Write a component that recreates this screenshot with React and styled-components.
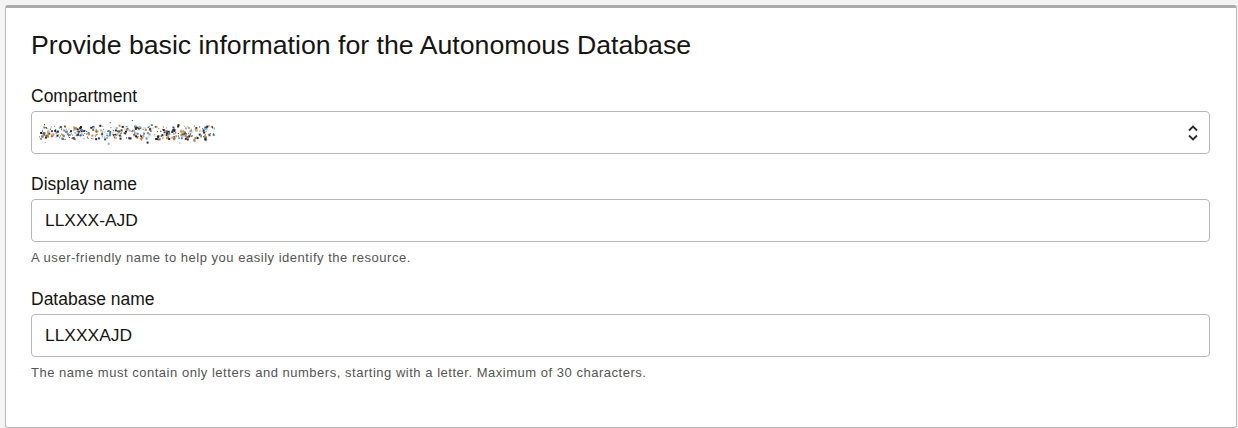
import React from "react";
import styled, { createGlobalStyle } from "styled-components";

const GlobalStyle = createGlobalStyle`
  body {
    margin: 0;
    background: #f4f4f4;
    font-family: "Liberation Sans", Arial, sans-serif;
  }
`;

const Page = styled.div`
  padding: 5px 1px 0 5px;
`;

const Card = styled.section`
  background: #fff;
  border: 1px solid #b9b9b9;
  border-top: 3px solid #ababab;
  border-radius: 3px;
  height: 423px;
  box-sizing: border-box;
  padding: 22px 26px 0 25px;
`;

const Title = styled.h2`
  margin: 0 0 26px;
  font-size: 26.7px;
  line-height: 30px;
  font-weight: 400;
  color: #161513;
`;

const Field = styled.div`
  display: flex;
  flex-direction: column;
  margin-bottom: ${(p) => (p.hasHelp ? "23px" : "20px")};
`;

const Label = styled.label`
  font-size: 17.5px;
  line-height: 20px;
  color: #161513;
  margin-bottom: 5px;
`;

const Box = styled.div`
  position: relative;
  display: flex;
  align-items: center;
  height: 43px;
  box-sizing: border-box;
  border: 1px solid #b5b7ba;
  border-radius: 4px;
  padding: 0 13px;
  font-size: 17.4px;
  color: #161513;
`;

const Help = styled.div`
  margin-top: 8px;
  font-size: 13px;
  letter-spacing: 0.52px;
  line-height: 16px;
  color: #555;
`;

const Arrows = styled.svg`
  position: absolute;
  right: 10px;
  top: 12px;
`;

// scribbled-out compartment name
const colors = ["#1f1f2e", "#c9772b", "#3d8ee0", "#8b5a2b", "#e8a14b", "#7fb7e8", "#4a4a4a", "#1d2f4f", "#c8ecf8", "#2a2a2a", "#d9822b"];
const dots = [];
let seed = 23;
const rnd = () => {
  seed = (seed * 9301 + 49297) % 233280;
  return seed / 233280;
};
// clusters of pixels, roughly one per glyph
for (let g = 0; g < 22; g++) {
  const cx = 4 + g * 7.8 + rnd() * 3;
  const count = 14 + Math.floor(rnd() * 18);
  for (let i = 0; i < count; i++) {
    const x = cx + (rnd() - 0.5) * 10;
    const spread = rnd() > 0.88 ? 24 : 13;
    const y = 13 + (rnd() - 0.5) * spread;
    dots.push({ x, y, c: colors[Math.floor(rnd() * colors.length)], s: rnd() > 0.55 ? 2 : 1 });
  }
}

const Scribble = () => (
  <svg width="176" height="28" viewBox="0 0 176 28" style={{ marginLeft: -6 }}>
    {dots.map((d, i) => (
      <rect key={i} x={d.x.toFixed(1)} y={d.y.toFixed(1)} width={d.s} height={d.s} fill={d.c} />
    ))}
  </svg>
);

export default function App() {
  return (
    <Page>
      <GlobalStyle />
      <Card>
        <Title>Provide basic information for the Autonomous Database</Title>
        <Field>
          <Label>Compartment</Label>
          <Box>
            <Scribble />
            <Arrows width="12" height="18" viewBox="0 0 12 18">
              <path d="M2 6.5 L6 2.5 L10 6.5" fill="none" stroke="#2b2b2b" strokeWidth="1.8" />
              <path d="M2 11.5 L6 15.5 L10 11.5" fill="none" stroke="#2b2b2b" strokeWidth="1.8" />
            </Arrows>
          </Box>
        </Field>
        <Field hasHelp>
          <Label>Display name</Label>
          <Box>LLXXX-AJD</Box>
          <Help>A user-friendly name to help you easily identify the resource.</Help>
        </Field>
        <Field hasHelp>
          <Label>Database name</Label>
          <Box>LLXXXAJD</Box>
          <Help>The name must contain only letters and numbers, starting with a letter. Maximum of 30 characters.</Help>
        </Field>
      </Card>
    </Page>
  );
}
